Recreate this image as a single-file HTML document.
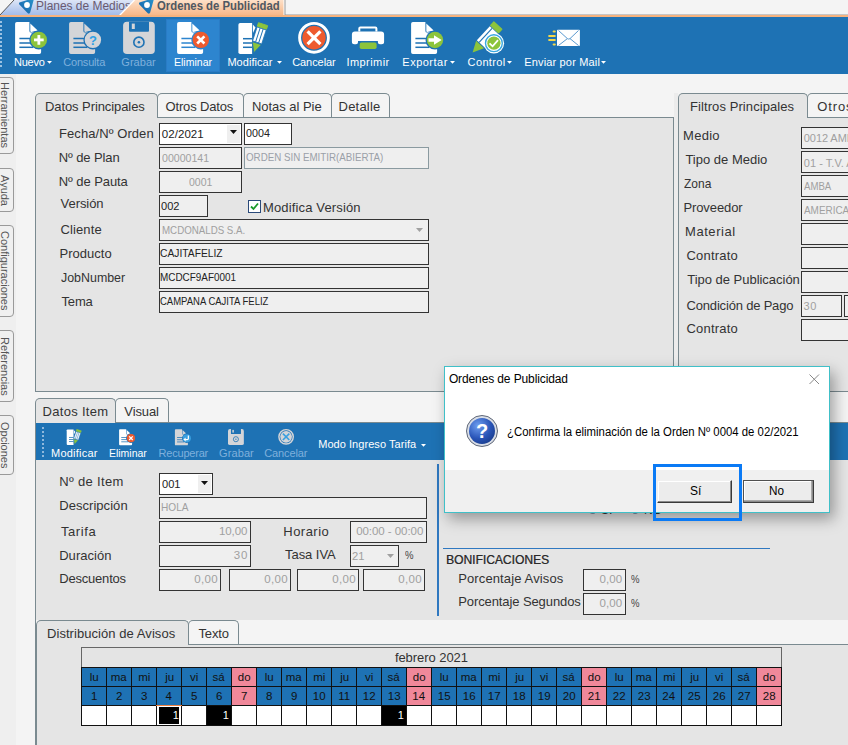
<!DOCTYPE html><html><head><meta charset="utf-8"><style>
html,body{margin:0;padding:0;width:848px;height:745px;overflow:hidden;background:#f4f4f4;position:relative;font-family:"Liberation Sans", sans-serif;}
.t{position:absolute;white-space:nowrap;}
.r{position:absolute;}
svg{position:absolute;overflow:visible;}
</style></head><body>
<div class="r" style="left:0px;top:0px;width:848px;height:16px;background:#f4f4f4;"></div>
<svg style="left:0;top:0" width="848" height="17"><defs><linearGradient id="gb" x1="0" y1="0" x2="0" y2="1"><stop offset="0" stop-color="#dde5f6"/><stop offset="1" stop-color="#a3bcea"/></linearGradient></defs><polygon points="0,15 14,0 140,0 125,15" fill="url(#gb)"/><line x1="0" y1="15" x2="14" y2="0" stroke="#555" stroke-width="1"/></svg>
<svg style="left:17.9px;top:-0.5999999999999996px" width="18" height="16" viewBox="0 0 18 16"><defs><linearGradient id="lg" x1="0" y1="1" x2="1" y2="0"><stop offset="0" stop-color="#155fa8"/><stop offset="1" stop-color="#2b95cc"/></linearGradient></defs><path d="M1.4 3.4 Q0.4 4.6 1.6 5.8 L9.8 14.2 Q11.4 15.4 12.2 13.6 L15.8 0.5 Q16.2 -1 14.6 -0.6 Z" fill="url(#lg)"/><circle cx="9" cy="6" r="2.9" fill="#fff"/></svg>
<div class="t" style="left:35.84px;top:-0.25px;font-size:12.5px;line-height:12.5px;color:#6a5a70;font-weight:normal;transform:scaleX(0.9560);transform-origin:0 0;">Planes de Medios</div>
<svg style="left:0;top:0" width="848" height="17"><defs><linearGradient id="go" x1="0" y1="0" x2="0" y2="1"><stop offset="0" stop-color="#fde0c8"/><stop offset="1" stop-color="#f7b585"/></linearGradient></defs><polygon points="119,16 134,0 284,0 284,16" fill="url(#go)"/><line x1="119.5" y1="15.5" x2="134.5" y2="0" stroke="#fff" stroke-width="1.2"/><line x1="284" y1="0" x2="284" y2="16" stroke="#fff" stroke-width="1"/><rect x="285" y="-1" width="570" height="16" fill="#f4f4f4" stroke="#999" stroke-width="1"/></svg>
<div class="r" style="left:0px;top:15px;width:848px;height:2px;background:#f5b27e;"></div>
<svg style="left:137.8px;top:-0.7000000000000002px" width="18" height="16" viewBox="0 0 18 16"><defs><linearGradient id="lg" x1="0" y1="1" x2="1" y2="0"><stop offset="0" stop-color="#155fa8"/><stop offset="1" stop-color="#2b95cc"/></linearGradient></defs><path d="M1.4 3.4 Q0.4 4.6 1.6 5.8 L9.8 14.2 Q11.4 15.4 12.2 13.6 L15.8 0.5 Q16.2 -1 14.6 -0.6 Z" fill="url(#lg)"/><circle cx="9" cy="6" r="2.9" fill="#fff"/></svg>
<div class="t" style="left:157.40px;top:-0.50px;font-size:12px;line-height:12px;color:#4f5862;font-weight:bold;transform:scaleX(0.9437);transform-origin:0 0;">Ordenes de Publicidad</div>
<div class="r" style="left:0px;top:17px;width:848px;height:57px;background:#1e72b4;"></div>
<div class="r" style="left:0px;top:21px;width:2px;height:47px;background:repeating-linear-gradient(#9cc2e2 0 2px, transparent 2px 4px);"></div>
<div class="r" style="left:166px;top:19px;width:54px;height:53px;background:#2d85cf;border:1px solid #2a7cc6;box-sizing:border-box;"></div>
<svg style="left:0;top:0" width="848" height="80"><path d="M16.9 22 L29.4 22 L29.4 31 Q29.4 32.6 31.1 32.6 L41.1 32.6 L41.1 52.2 Q41.1 54 39.3 54 L16.9 54 Q15.1 54 15.1 52.2 L15.1 23.8 Q15.1 22 16.9 22 Z" fill="#fff"/><path d="M30.299999999999997 23.6 L37.7 30.6 Q34.1 31.6 31.299999999999997 32 Q30.299999999999997 32 30.299999999999997 31 Z" fill="#fff"/><rect x="19.4" y="37.75" width="14" height="1.5" fill="#1e72b4"/><rect x="19.4" y="42.25" width="14" height="1.5" fill="#1e72b4"/><rect x="19.4" y="46.55" width="14" height="1.5" fill="#1e72b4"/><circle cx="38.8" cy="39.9" r="9.5" fill="#1e72b4"/><circle cx="38.8" cy="39.9" r="8.2" fill="#8cc43c"/><rect x="34" y="38.5" width="9.7" height="2.8" fill="#fff"/><rect x="37.45" y="35.05" width="2.8" height="9.7" fill="#fff"/><path d="M70.89999999999999 22 L83.39999999999999 22 L83.39999999999999 31 Q83.39999999999999 32.6 85.1 32.6 L95.1 32.6 L95.1 52.2 Q95.1 54 93.3 54 L70.89999999999999 54 Q69.1 54 69.1 52.2 L69.1 23.8 Q69.1 22 70.89999999999999 22 Z" fill="#d4d5d8"/><path d="M84.3 23.6 L91.69999999999999 30.6 Q88.1 31.6 85.3 32 Q84.3 32 84.3 31 Z" fill="#d4d5d8"/><rect x="73.39999999999999" y="37.75" width="14" height="1.5" fill="#1e72b4"/><rect x="73.39999999999999" y="42.25" width="14" height="1.5" fill="#1e72b4"/><rect x="73.39999999999999" y="46.55" width="14" height="1.5" fill="#1e72b4"/><circle cx="92.9" cy="39.9" r="9.5" fill="#1e72b4"/><circle cx="92.9" cy="39.9" r="8.2" fill="#d4d5d8"/><text x="93" y="44.6" font-size="13" font-weight="bold" text-anchor="middle" fill="#2fa0e4" font-family="Liberation Sans">?</text><path d="M127 21.8 L151 21.8 Q154.8 21.8 154.8 25.6 L154.8 50.2 Q154.8 54 151 54 L127 54 Q123.1 54 123.1 50.2 L123.1 25.6 Q123.1 21.8 127 21.8 Z" fill="#d4d5d8"/><path d="M129 21.8 L149 21.8 L149 30.8 Q149 31.8 148 31.8 L130 31.8 Q129 31.8 129 30.8 Z" fill="#1e72b4"/><rect x="131.8" y="23.6" width="3" height="5.4" fill="#d4d5d8"/><circle cx="138.9" cy="42.2" r="5.1" fill="none" stroke="#1e72b4" stroke-width="1.6"/><circle cx="138.9" cy="42.2" r="1.3" fill="#1e72b4"/><path d="M178.9 22 L191.4 22 L191.4 31 Q191.4 32.6 193.1 32.6 L203.1 32.6 L203.1 52.2 Q203.1 54 201.29999999999998 54 L178.9 54 Q177.1 54 177.1 52.2 L177.1 23.8 Q177.1 22 178.9 22 Z" fill="#fff"/><path d="M192.29999999999998 23.6 L199.7 30.6 Q196.1 31.6 193.29999999999998 32 Q192.29999999999998 32 192.29999999999998 31 Z" fill="#fff"/><rect x="181.4" y="37.75" width="14" height="1.5" fill="#2d85cf"/><rect x="181.4" y="42.25" width="14" height="1.5" fill="#2d85cf"/><rect x="181.4" y="46.55" width="14" height="1.5" fill="#2d85cf"/><circle cx="200.8" cy="39.9" r="9.5" fill="#2d85cf"/><circle cx="200.8" cy="39.9" r="8.2" fill="#ee5a2e"/><path d="M197.2 36.3 L204.4 43.5 M204.4 36.3 L197.2 43.5" stroke="#fff" stroke-width="2.6"/><path d="M240.2 22.9 L252.1 22.9 L252.1 54 L240.2 54 Q238.4 54 238.4 52.2 L238.4 24.7 Q238.4 22.9 240.2 22.9 Z" fill="#fff"/><path d="M252.8 24.5 L255.5 27.5 L253 33 Z" fill="#fff"/><rect x="243" y="37.95" width="9" height="1.5" fill="#1e72b4"/><rect x="243" y="42.25" width="9" height="1.5" fill="#1e72b4"/><rect x="243" y="46.55" width="9" height="1.5" fill="#1e72b4"/><polygon points="253.80,52.70 252.33,41.71 261.46,44.67" fill="#8cc43c" stroke="#1e72b4" stroke-width="0.8"/><polygon points="252.57,40.95 261.70,43.91 266.25,29.93 257.11,26.96" fill="#fff" stroke="#1e72b4" stroke-width="0.8"/><polyline points="255.62,41.93 260.16,27.95" stroke="#1e72b4" stroke-width="1"/><polyline points="258.66,42.92 263.20,28.94" stroke="#1e72b4" stroke-width="1"/><polygon points="257.36,26.20 266.49,29.17 267.64,25.65 258.51,22.69" fill="#8cc43c" stroke="#8cc43c" stroke-width="1" stroke-linejoin="round"/><circle cx="314" cy="37.8" r="14.4" fill="none" stroke="#fff" stroke-width="2.9"/><circle cx="314" cy="37.8" r="11.7" fill="#ee5a2e"/><path d="M307.6 31.4 L320.4 44.2 M320.4 31.4 L307.6 44.2" stroke="#fff" stroke-width="3.2"/><path d="M359.3 31.5 L359.3 28.6 Q359.3 27.6 360.3 27.6 L375.4 27.6 Q376.4 27.6 376.4 28.6 L376.4 31.5" fill="none" stroke="#fff" stroke-width="2"/><path d="M354.9 31.4 L381.1 31.4 Q384.1 31.4 384.1 34.4 L384.1 41.8 Q384.1 44.3 381.6 44.3 L379.9 44.3 Q377.9 44.3 377.9 42.3 L377.9 41 L358 41 L358 42.3 Q358 44.3 356 44.3 L354.4 44.3 Q351.9 44.3 351.9 41.8 L351.9 34.4 Q351.9 31.4 354.9 31.4 Z" fill="#fff"/><rect x="359.7" y="42.6" width="16.9" height="6.5" rx="1.8" fill="#8cc43c"/><path d="M412.90000000000003 22 L425.40000000000003 22 L425.40000000000003 31 Q425.40000000000003 32.6 427.1 32.6 L437.1 32.6 L437.1 52.2 Q437.1 54 435.3 54 L412.90000000000003 54 Q411.1 54 411.1 52.2 L411.1 23.8 Q411.1 22 412.90000000000003 22 Z" fill="#fff"/><path d="M426.3 23.6 L433.70000000000005 30.6 Q430.1 31.6 427.3 32 Q426.3 32 426.3 31 Z" fill="#fff"/><rect x="415.40000000000003" y="37.75" width="14" height="1.5" fill="#1e72b4"/><rect x="415.40000000000003" y="42.25" width="14" height="1.5" fill="#1e72b4"/><rect x="415.40000000000003" y="46.55" width="14" height="1.5" fill="#1e72b4"/><circle cx="435" cy="40" r="9.5" fill="#1e72b4"/><circle cx="435" cy="40" r="8.2" fill="#8cc43c"/><path d="M428.5 38.2 L434 38.2 L434 35.2 L441.7 40 L434 44.8 L434 41.8 L428.5 41.8 Z" fill="#fff"/><polygon points="472.60,52.60 476.15,40.87 484.05,48.24" fill="#8cc43c"/><polygon points="476.83,40.14 484.73,47.51 497.69,33.61 489.79,26.25" fill="#fff"/><polyline points="479.10,42.26 492.06,28.36" stroke="#1e72b4" stroke-width="1.1"/><polygon points="490.61,25.37 498.51,32.73 501.78,29.22 493.88,21.86" fill="#8cc43c" stroke="#8cc43c" stroke-width="1.2" stroke-linejoin="round"/><circle cx="493.9" cy="43.2" r="10.2" fill="#fff"/><circle cx="493.9" cy="43.2" r="8.4" fill="none" stroke="#3aa8e0" stroke-width="1.4"/><circle cx="493.9" cy="43.2" r="6.6" fill="#8cc43c"/><path d="M489.5 43.3 L492.6 46.3 L498 40.2" fill="none" stroke="#fff" stroke-width="1.8"/><rect x="557" y="29.8" width="22.9" height="16.3" rx="0.8" fill="#fff"/><path d="M558.5 30.5 L567.4 38.6 L558.5 45.5 M578.5 30.5 L570 38.6 L578.5 45.5 M567.4 38.6 Q568.7 39.6 570 38.6" fill="none" stroke="#5a9ad0" stroke-width="1"/><line x1="553.6" y1="31.5" x2="554.8" y2="31.5" stroke="#f5d84a" stroke-width="2" stroke-linecap="round"/><line x1="549.1" y1="35.9" x2="554.8" y2="35.9" stroke="#f5d84a" stroke-width="2" stroke-linecap="round"/><line x1="549.1" y1="40" x2="554.8" y2="40" stroke="#f5d84a" stroke-width="2" stroke-linecap="round"/><line x1="553.6" y1="44.6" x2="554.8" y2="44.6" stroke="#f5d84a" stroke-width="2" stroke-linecap="round"/></svg>
<div class="t" style="left:13.90px;top:57.00px;font-size:11px;line-height:11px;color:#fff;font-weight:normal;letter-spacing:-0.195px;">Nuevo</div>
<svg style="left:47.2px;top:61.2px" width="6" height="4"><path d="M0 0 L5 0 L2.5 2.8 Z" fill="#fff"/></svg>
<div class="t" style="left:63.20px;top:57.00px;font-size:11px;line-height:11px;color:#7fb0dc;font-weight:normal;letter-spacing:-0.185px;">Consulta</div>
<div class="t" style="left:121.30px;top:57.00px;font-size:11px;line-height:11px;color:#7fb0dc;font-weight:normal;letter-spacing:0.046px;">Grabar</div>
<div class="t" style="left:173.70px;top:57.00px;font-size:11px;line-height:11px;color:#fff;font-weight:normal;transform:scaleX(0.9559);transform-origin:0 0;">Eliminar</div>
<div class="t" style="left:227.40px;top:57.00px;font-size:11px;line-height:11px;color:#fff;font-weight:normal;letter-spacing:0.055px;">Modificar</div>
<svg style="left:277px;top:61.2px" width="6" height="4"><path d="M0 0 L5 0 L2.5 2.8 Z" fill="#fff"/></svg>
<div class="t" style="left:292.20px;top:57.00px;font-size:11px;line-height:11px;color:#fff;font-weight:normal;letter-spacing:-0.065px;">Cancelar</div>
<div class="t" style="left:346.40px;top:57.00px;font-size:11px;line-height:11px;color:#fff;font-weight:normal;letter-spacing:0.450px;">Imprimir</div>
<div class="t" style="left:402.30px;top:57.00px;font-size:11px;line-height:11px;color:#fff;font-weight:normal;letter-spacing:0.499px;">Exportar</div>
<svg style="left:450px;top:61.2px" width="6" height="4"><path d="M0 0 L5 0 L2.5 2.8 Z" fill="#fff"/></svg>
<div class="t" style="left:467.60px;top:57.00px;font-size:11px;line-height:11px;color:#fff;font-weight:normal;letter-spacing:0.364px;">Control</div>
<svg style="left:506.5px;top:61.2px" width="6" height="4"><path d="M0 0 L5 0 L2.5 2.8 Z" fill="#fff"/></svg>
<div class="t" style="left:524.20px;top:57.00px;font-size:11px;line-height:11px;color:#fff;font-weight:normal;letter-spacing:0.163px;">Enviar por Mail</div>
<svg style="left:600.8px;top:61.2px" width="6" height="4"><path d="M0 0 L5 0 L2.5 2.8 Z" fill="#fff"/></svg>
<div class="r" style="left:0px;top:74px;width:16px;height:671px;background:#efefef;"></div>
<div class="r" style="left:-6px;top:77px;width:20px;height:77px;border:1px solid #9a9a9a;border-radius:0 4px 4px 0;box-sizing:border-box;background:#f0f0f0;"></div>
<div class="t" style="left:-1px;top:77px;height:77px;width:12px;writing-mode:vertical-rl;font-size:11px;line-height:12px;color:#555;text-align:center;display:flex;align-items:center;justify-content:center;">Herramientas</div>
<div class="r" style="left:-6px;top:168px;width:20px;height:44px;border:1px solid #9a9a9a;border-radius:0 4px 4px 0;box-sizing:border-box;background:#f0f0f0;"></div>
<div class="t" style="left:-1px;top:168px;height:44px;width:12px;writing-mode:vertical-rl;font-size:11px;line-height:12px;color:#555;text-align:center;display:flex;align-items:center;justify-content:center;">Ayuda</div>
<div class="r" style="left:-6px;top:225px;width:20px;height:92px;border:1px solid #9a9a9a;border-radius:0 4px 4px 0;box-sizing:border-box;background:#f0f0f0;"></div>
<div class="t" style="left:-1px;top:225px;height:92px;width:12px;writing-mode:vertical-rl;font-size:11px;line-height:12px;color:#555;text-align:center;display:flex;align-items:center;justify-content:center;">Configuraciones</div>
<div class="r" style="left:-6px;top:330px;width:20px;height:72px;border:1px solid #9a9a9a;border-radius:0 4px 4px 0;box-sizing:border-box;background:#f0f0f0;"></div>
<div class="t" style="left:-1px;top:330px;height:72px;width:12px;writing-mode:vertical-rl;font-size:11px;line-height:12px;color:#555;text-align:center;display:flex;align-items:center;justify-content:center;">Referencias</div>
<div class="r" style="left:-6px;top:415px;width:20px;height:60px;border:1px solid #9a9a9a;border-radius:0 4px 4px 0;box-sizing:border-box;background:#f0f0f0;"></div>
<div class="t" style="left:-1px;top:415px;height:60px;width:12px;writing-mode:vertical-rl;font-size:11px;line-height:12px;color:#555;text-align:center;display:flex;align-items:center;justify-content:center;">Opciones</div>
<div class="r" style="left:35px;top:117px;width:639px;height:275px;background:#e5e5e5;border:1px solid #7a8a90;box-sizing:border-box;"></div>
<div class="r" style="left:35px;top:93px;width:123px;height:24px;background:#e5e5e5;border:1px solid #7a8a90;border-bottom:none;border-radius:5px 5px 0 0;box-sizing:border-box;"></div>
<div class="r" style="left:157px;top:93px;width:87px;height:24px;background:#f4f4f4;border:1px solid #7a8a90;border-bottom:none;border-radius:5px 5px 0 0;box-sizing:border-box;"></div>
<div class="r" style="left:243px;top:93px;width:89px;height:24px;background:#f4f4f4;border:1px solid #7a8a90;border-bottom:none;border-radius:5px 5px 0 0;box-sizing:border-box;"></div>
<div class="r" style="left:331px;top:93px;width:59px;height:24px;background:#f4f4f4;border:1px solid #7a8a90;border-bottom:none;border-radius:5px 5px 0 0;box-sizing:border-box;"></div>
<div class="r" style="left:36px;top:117px;width:121px;height:1px;background:#e5e5e5;"></div>
<div class="t" style="left:45.00px;top:99.80px;font-size:13px;line-height:13px;color:#333;font-weight:normal;letter-spacing:-0.085px;">Datos Principales</div>
<div class="t" style="left:165.50px;top:99.80px;font-size:13px;line-height:13px;color:#333;font-weight:normal;letter-spacing:-0.155px;">Otros Datos</div>
<div class="t" style="left:251.90px;top:99.80px;font-size:13px;line-height:13px;color:#333;font-weight:normal;letter-spacing:-0.024px;">Notas al Pie</div>
<div class="t" style="left:338.60px;top:99.80px;font-size:13px;line-height:13px;color:#333;font-weight:normal;letter-spacing:0.194px;">Detalle</div>
<div class="t" style="left:59.00px;top:126.80px;font-size:13px;line-height:13px;color:#333;font-weight:normal;letter-spacing:0.078px;">Fecha/Nº Orden</div>
<div class="t" style="left:58.80px;top:150.80px;font-size:13px;line-height:13px;color:#333;font-weight:normal;letter-spacing:-0.101px;">Nº de Plan</div>
<div class="t" style="left:58.80px;top:174.50px;font-size:13px;line-height:13px;color:#333;font-weight:normal;letter-spacing:-0.076px;">Nº de Pauta</div>
<div class="t" style="left:60.60px;top:196.90px;font-size:13px;line-height:13px;color:#333;font-weight:normal;letter-spacing:-0.072px;">Versión</div>
<div class="t" style="left:60.60px;top:222.60px;font-size:13px;line-height:13px;color:#333;font-weight:normal;letter-spacing:0.094px;">Cliente</div>
<div class="t" style="left:59.60px;top:246.50px;font-size:13px;line-height:13px;color:#333;font-weight:normal;letter-spacing:-0.000px;">Producto</div>
<div class="t" style="left:60.60px;top:270.60px;font-size:13px;line-height:13px;color:#333;font-weight:normal;transform:scaleX(0.9548);transform-origin:0 0;">JobNumber</div>
<div class="t" style="left:61.40px;top:294.80px;font-size:13px;line-height:13px;color:#333;font-weight:normal;letter-spacing:-0.120px;">Tema</div>
<div class="r" style="left:159px;top:123px;width:83px;height:22px;background:#fff;border:1px solid #333;box-sizing:border-box;"></div>
<div class="r" style="left:227px;top:125px;width:13px;height:18px;background:#efefef;"></div>
<svg style="left:230px;top:130px" width="8" height="5"><path d="M0 0 L7 0 L3.5 4 Z" fill="#111"/></svg>
<div class="t" style="left:161.80px;top:128.75px;font-size:11.5px;line-height:11.5px;color:#222;font-weight:normal;letter-spacing:0.054px;">02/2021</div>
<div class="r" style="left:244px;top:123px;width:48px;height:22px;background:#fff;border:1px solid #333;box-sizing:border-box;"></div>
<div class="t" style="left:246.00px;top:128.05px;font-size:11.5px;line-height:11.5px;color:#222;font-weight:normal;transform:scaleX(0.9318);transform-origin:0 0;">0004</div>
<div class="r" style="left:159px;top:147px;width:83px;height:22px;background:#efefef;border:1px solid #333;box-sizing:border-box;"></div>
<div class="t" style="left:161.50px;top:152.85px;font-size:11.5px;line-height:11.5px;color:#a0a0a0;font-weight:normal;transform:scaleX(0.9198);transform-origin:0 0;">00000141</div>
<div class="r" style="left:244px;top:147px;width:185px;height:22px;background:#efefef;border:1px solid #8a9aa0;box-sizing:border-box;"></div>
<div class="t" style="left:245.60px;top:152.30px;font-size:11px;line-height:11px;color:#9aa0a8;font-weight:normal;transform:scaleX(0.8867);transform-origin:0 0;">ORDEN SIN EMITIR(ABIERTA)</div>
<div class="r" style="left:159px;top:171px;width:83px;height:22px;background:#efefef;border:1px solid #333;box-sizing:border-box;"></div>
<div class="t" style="left:188.50px;top:176.55px;font-size:11.5px;line-height:11.5px;color:#a0a0a0;font-weight:normal;transform:scaleX(0.9132);transform-origin:0 0;">0001</div>
<div class="r" style="left:159px;top:195px;width:49px;height:22px;background:#efefef;border:1px solid #333;box-sizing:border-box;"></div>
<div class="t" style="left:160.50px;top:200.55px;font-size:11.5px;line-height:11.5px;color:#222;font-weight:normal;transform:scaleX(0.9632);transform-origin:0 0;">002</div>
<div class="r" style="left:248px;top:200px;width:13px;height:13px;background:#fff;border:1px solid #2a4a7a;box-sizing:border-box;"></div>
<svg style="left:249px;top:201px" width="11" height="11"><path d="M2 5.5 L4.5 8 L9 2.5" fill="none" stroke="#1a9a2a" stroke-width="1.8"/></svg>
<div class="t" style="left:263.00px;top:200.50px;font-size:13px;line-height:13px;color:#333;font-weight:normal;letter-spacing:0.143px;">Modifica Versión</div>
<div class="r" style="left:159px;top:219px;width:270px;height:22px;background:#efefef;border:1px solid #333;box-sizing:border-box;"></div>
<div class="t" style="left:162.40px;top:225.45px;font-size:10.5px;line-height:10.5px;color:#a0a0a0;font-weight:normal;transform:scaleX(0.9265);transform-origin:0 0;">MCDONALDS S.A.</div>
<svg style="left:416px;top:228px" width="8" height="5"><path d="M0 0 L7 0 L3.5 4 Z" fill="#a0a0a0"/></svg>
<div class="r" style="left:159px;top:243px;width:270px;height:22px;background:#efefef;border:1px solid #333;box-sizing:border-box;"></div>
<div class="t" style="left:160.40px;top:248.30px;font-size:11px;line-height:11px;color:#222;font-weight:normal;transform:scaleX(0.9345);transform-origin:0 0;">CAJITAFELIZ</div>
<div class="r" style="left:159px;top:267px;width:270px;height:22px;background:#efefef;border:1px solid #333;box-sizing:border-box;"></div>
<div class="t" style="left:160.40px;top:272.20px;font-size:11px;line-height:11px;color:#222;font-weight:normal;transform:scaleX(0.9010);transform-origin:0 0;">MCDCF9AF0001</div>
<div class="r" style="left:159px;top:291px;width:270px;height:22px;background:#efefef;border:1px solid #333;box-sizing:border-box;"></div>
<div class="t" style="left:160.40px;top:296.00px;font-size:11px;line-height:11px;color:#222;font-weight:normal;transform:scaleX(0.8638);transform-origin:0 0;">CAMPANA CAJITA FELIZ</div>
<div class="r" style="left:674px;top:93px;width:4px;height:299px;background:#ececec;"></div>
<div class="r" style="left:678px;top:117px;width:182px;height:275px;background:#e5e5e5;border:1px solid #7a8a90;box-sizing:border-box;"></div>
<div class="r" style="left:678px;top:93px;width:130px;height:24px;background:#e5e5e5;border:1px solid #7a8a90;border-bottom:none;border-radius:5px 5px 0 0;box-sizing:border-box;"></div>
<div class="r" style="left:807px;top:93px;width:64px;height:24px;background:#f4f4f4;border:1px solid #7a8a90;border-bottom:none;border-radius:5px 5px 0 0;box-sizing:border-box;"></div>
<div class="r" style="left:679px;top:117px;width:128px;height:1px;background:#e5e5e5;"></div>
<div class="t" style="left:690.00px;top:99.70px;font-size:13px;line-height:13px;color:#333;font-weight:normal;letter-spacing:0.084px;">Filtros Principales</div>
<div class="t" style="left:817.30px;top:99.70px;font-size:13px;line-height:13px;color:#333;font-weight:normal;letter-spacing:0.879px;">Otros</div>
<div class="t" style="left:683.10px;top:128.50px;font-size:13px;line-height:13px;color:#333;font-weight:normal;letter-spacing:0.256px;">Medio</div>
<div class="t" style="left:685.40px;top:152.50px;font-size:13px;line-height:13px;color:#333;font-weight:normal;letter-spacing:0.003px;">Tipo de Medio</div>
<div class="t" style="left:684.40px;top:176.50px;font-size:13px;line-height:13px;color:#333;font-weight:normal;transform:scaleX(0.9210);transform-origin:0 0;">Zona</div>
<div class="t" style="left:683.40px;top:200.50px;font-size:13px;line-height:13px;color:#333;font-weight:normal;letter-spacing:-0.094px;">Proveedor</div>
<div class="t" style="left:685.00px;top:225.00px;font-size:13px;line-height:13px;color:#333;font-weight:normal;letter-spacing:0.565px;">Material</div>
<div class="t" style="left:686.50px;top:248.70px;font-size:13px;line-height:13px;color:#333;font-weight:normal;letter-spacing:0.210px;">Contrato</div>
<div class="t" style="left:687.30px;top:273.00px;font-size:13px;line-height:13px;color:#333;font-weight:normal;letter-spacing:-0.025px;">Tipo de Publicación</div>
<div class="t" style="left:686.60px;top:298.50px;font-size:13px;line-height:13px;color:#333;font-weight:normal;letter-spacing:-0.189px;">Condición de Pago</div>
<div class="t" style="left:686.50px;top:322.00px;font-size:13px;line-height:13px;color:#333;font-weight:normal;letter-spacing:0.210px;">Contrato</div>
<div class="r" style="left:801px;top:127px;width:69px;height:22px;background:#efefef;border:1px solid #333;box-sizing:border-box;"></div>
<div class="t" style="left:803.80px;top:133.40px;font-size:11px;line-height:11px;color:#a0a0a0;font-weight:normal;letter-spacing:-0.070px;">0012 AMBA</div>
<div class="r" style="left:801px;top:151px;width:69px;height:22px;background:#efefef;border:1px solid #333;box-sizing:border-box;"></div>
<div class="t" style="left:803.80px;top:157.50px;font-size:11px;line-height:11px;color:#a0a0a0;font-weight:normal;letter-spacing:0.035px;">01 - T.V. AIRE</div>
<div class="r" style="left:801px;top:175px;width:69px;height:22px;background:#efefef;border:1px solid #333;box-sizing:border-box;"></div>
<div class="t" style="left:803.80px;top:181.00px;font-size:11px;line-height:11px;color:#a0a0a0;font-weight:normal;transform:scaleX(0.8732);transform-origin:0 0;">AMBA</div>
<div class="r" style="left:801px;top:199px;width:69px;height:22px;background:#efefef;border:1px solid #333;box-sizing:border-box;"></div>
<div class="t" style="left:803.80px;top:205.00px;font-size:11px;line-height:11px;color:#a0a0a0;font-weight:normal;transform:scaleX(0.9019);transform-origin:0 0;">AMERICA</div>
<div class="r" style="left:801px;top:223px;width:69px;height:22px;background:#efefef;border:1px solid #333;box-sizing:border-box;"></div>
<div class="r" style="left:801px;top:247px;width:69px;height:22px;background:#efefef;border:1px solid #333;box-sizing:border-box;"></div>
<div class="r" style="left:801px;top:271px;width:69px;height:22px;background:#efefef;border:1px solid #333;box-sizing:border-box;"></div>
<div class="r" style="left:801px;top:295px;width:41px;height:22px;background:#efefef;border:1px solid #333;box-sizing:border-box;"></div>
<div class="t" style="left:803.50px;top:301.00px;font-size:11px;line-height:11px;color:#a0a0a0;font-weight:normal;letter-spacing:0.682px;">30</div>
<div class="r" style="left:844px;top:295px;width:26px;height:22px;background:#efefef;border:1px solid #333;box-sizing:border-box;"></div>
<div class="r" style="left:801px;top:319px;width:69px;height:22px;background:#efefef;border:1px solid #333;box-sizing:border-box;"></div>
<div class="r" style="left:35px;top:422px;width:825px;height:338px;background:#e5e5e5;border:1px solid #7a8a90;box-sizing:border-box;"></div>
<div class="r" style="left:35px;top:398px;width:81px;height:24px;background:#e5e5e5;border:1px solid #7a8a90;border-bottom:none;border-radius:5px 5px 0 0;box-sizing:border-box;"></div>
<div class="r" style="left:115px;top:398px;width:54px;height:24px;background:#f4f4f4;border:1px solid #7a8a90;border-bottom:none;border-radius:5px 5px 0 0;box-sizing:border-box;"></div>
<div class="r" style="left:36px;top:422px;width:79px;height:1px;background:#e5e5e5;"></div>
<div class="t" style="left:42.60px;top:404.70px;font-size:13px;line-height:13px;color:#333;font-weight:normal;letter-spacing:0.286px;">Datos Item</div>
<div class="t" style="left:124.30px;top:404.70px;font-size:13px;line-height:13px;color:#333;font-weight:normal;letter-spacing:-0.097px;">Visual</div>
<div class="r" style="left:36px;top:423px;width:824px;height:37px;background:#1e72b4;"></div>
<div class="r" style="left:42px;top:427px;width:2px;height:30px;background:repeating-linear-gradient(#8fb8dc 0 2px, transparent 2px 4px);"></div>
<div class="t" style="left:51.00px;top:448.20px;font-size:11px;line-height:11px;color:#fff;font-weight:normal;letter-spacing:0.230px;">Modificar</div>
<div class="t" style="left:108.70px;top:448.20px;font-size:11px;line-height:11px;color:#fff;font-weight:normal;transform:scaleX(0.9509);transform-origin:0 0;">Eliminar</div>
<div class="t" style="left:158.50px;top:448.20px;font-size:11px;line-height:11px;color:#7fb0dc;font-weight:normal;letter-spacing:-0.199px;">Recuperar</div>
<div class="t" style="left:219.00px;top:448.20px;font-size:11px;line-height:11px;color:#7fb0dc;font-weight:normal;letter-spacing:0.106px;">Grabar</div>
<div class="t" style="left:264.30px;top:448.20px;font-size:11px;line-height:11px;color:#7fb0dc;font-weight:normal;letter-spacing:-0.137px;">Cancelar</div>
<div class="t" style="left:318.20px;top:438.50px;font-size:11px;line-height:11px;color:#fff;font-weight:normal;letter-spacing:0.050px;">Modo Ingreso Tarifa</div>
<svg style="left:421px;top:444px" width="6" height="4"><path d="M0 0 L5 0 L2.5 2.8 Z" fill="#fff"/></svg>
<svg style="left:0;top:0" width="848" height="745"><g transform="translate(-52.50,418.00) scale(0.5)"><path d="M240.2 22.9 L252.1 22.9 L252.1 54 L240.2 54 Q238.4 54 238.4 52.2 L238.4 24.7 Q238.4 22.9 240.2 22.9 Z" fill="#fff"/><path d="M252.8 24.5 L255.5 27.5 L253 33 Z" fill="#fff"/><rect x="243" y="37.95" width="9" height="1.5" fill="#1e72b4"/><rect x="243" y="42.25" width="9" height="1.5" fill="#1e72b4"/><rect x="243" y="46.55" width="9" height="1.5" fill="#1e72b4"/><polygon points="253.80,52.70 252.33,41.71 261.46,44.67" fill="#8cc43c" stroke="#1e72b4" stroke-width="0.8"/><polygon points="252.57,40.95 261.70,43.91 266.25,29.93 257.11,26.96" fill="#fff" stroke="#1e72b4" stroke-width="0.8"/><polyline points="255.62,41.93 260.16,27.95" stroke="#1e72b4" stroke-width="1"/><polyline points="258.66,42.92 263.20,28.94" stroke="#1e72b4" stroke-width="1"/><polygon points="257.36,26.20 266.49,29.17 267.64,25.65 258.51,22.69" fill="#8cc43c" stroke="#8cc43c" stroke-width="1" stroke-linejoin="round"/></g><g transform="translate(30.55,418.20) scale(0.5)"><path d="M178.9 22 L191.4 22 L191.4 31 Q191.4 32.6 193.1 32.6 L203.1 32.6 L203.1 52.2 Q203.1 54 201.29999999999998 54 L178.9 54 Q177.1 54 177.1 52.2 L177.1 23.8 Q177.1 22 178.9 22 Z" fill="#fff"/><path d="M192.29999999999998 23.6 L199.7 30.6 Q196.1 31.6 193.29999999999998 32 Q192.29999999999998 32 192.29999999999998 31 Z" fill="#fff"/><rect x="181.4" y="37.75" width="14" height="1.5" fill="#1e72b4"/><rect x="181.4" y="42.25" width="14" height="1.5" fill="#1e72b4"/><rect x="181.4" y="46.55" width="14" height="1.5" fill="#1e72b4"/><circle cx="200.8" cy="39.9" r="9.5" fill="#1e72b4"/><circle cx="200.8" cy="39.9" r="8.2" fill="#ee5a2e"/><path d="M197.2 36.3 L204.4 43.5 M204.4 36.3 L197.2 43.5" stroke="#fff" stroke-width="2.6"/></g><g transform="translate(140.35,418.30) scale(0.5)"><path d="M70.89999999999999 22 L83.39999999999999 22 L83.39999999999999 31 Q83.39999999999999 32.6 85.1 32.6 L95.1 32.6 L95.1 52.2 Q95.1 54 93.3 54 L70.89999999999999 54 Q69.1 54 69.1 52.2 L69.1 23.8 Q69.1 22 70.89999999999999 22 Z" fill="#d4d5d8"/><path d="M84.3 23.6 L91.69999999999999 30.6 Q88.1 31.6 85.3 32 Q84.3 32 84.3 31 Z" fill="#d4d5d8"/><rect x="73.39999999999999" y="37.75" width="14" height="1.5" fill="#1e72b4"/><rect x="73.39999999999999" y="42.25" width="14" height="1.5" fill="#1e72b4"/><rect x="73.39999999999999" y="46.55" width="14" height="1.5" fill="#1e72b4"/><circle cx="92.9" cy="39.9" r="9.5" fill="#1e72b4"/><circle cx="92.9" cy="39.9" r="8.2" fill="#3aa0e0"/><path d="M96 34.5 L96 40.5 Q96 42.5 94 42.5 L89.5 42.5" fill="none" stroke="#fff" stroke-width="2.4"/><path d="M90.5 38.5 L86 42.5 L90.5 46.5 Z" fill="#fff"/></g><g transform="translate(166.45,418.10) scale(0.5)"><path d="M127 21.8 L151 21.8 Q154.8 21.8 154.8 25.6 L154.8 50.2 Q154.8 54 151 54 L127 54 Q123.1 54 123.1 50.2 L123.1 25.6 Q123.1 21.8 127 21.8 Z" fill="#d4d5d8"/><path d="M129 21.8 L149 21.8 L149 30.8 Q149 31.8 148 31.8 L130 31.8 Q129 31.8 129 30.8 Z" fill="#1e72b4"/><rect x="131.8" y="23.6" width="3" height="5.4" fill="#d4d5d8"/><circle cx="138.9" cy="42.2" r="5.1" fill="none" stroke="#1e72b4" stroke-width="1.6"/><circle cx="138.9" cy="42.2" r="1.3" fill="#1e72b4"/></g><g transform="translate(129.10,417.90) scale(0.5)"><circle cx="314" cy="37.8" r="14.4" fill="none" stroke="#d4d5d8" stroke-width="2.9"/><circle cx="314" cy="37.8" r="11.7" fill="#d4d5d8"/><path d="M307.6 31.4 L320.4 44.2 M320.4 31.4 L307.6 44.2" stroke="#3aa0e0" stroke-width="3.2"/></g></svg>
<div class="t" style="left:59.20px;top:475.00px;font-size:13px;line-height:13px;color:#333;font-weight:normal;letter-spacing:0.336px;">Nº de Item</div>
<div class="t" style="left:59.20px;top:499.00px;font-size:13px;line-height:13px;color:#333;font-weight:normal;letter-spacing:0.052px;">Descripción</div>
<div class="t" style="left:61.00px;top:525.00px;font-size:13px;line-height:13px;color:#333;font-weight:normal;letter-spacing:0.568px;">Tarifa</div>
<div class="t" style="left:59.20px;top:548.70px;font-size:13px;line-height:13px;color:#333;font-weight:normal;letter-spacing:0.044px;">Duración</div>
<div class="t" style="left:59.20px;top:571.50px;font-size:13px;line-height:13px;color:#333;font-weight:normal;letter-spacing:-0.194px;">Descuentos</div>
<div class="r" style="left:159px;top:473px;width:54px;height:22px;background:#fff;border:1px solid #333;box-sizing:border-box;"></div>
<div class="r" style="left:198px;top:475px;width:13px;height:18px;background:#efefef;"></div>
<svg style="left:201px;top:481px" width="8" height="5"><path d="M0 0 L7 0 L3.5 4 Z" fill="#111"/></svg>
<div class="t" style="left:161.70px;top:479.25px;font-size:11.5px;line-height:11.5px;color:#222;font-weight:normal;transform:scaleX(0.9632);transform-origin:0 0;">001</div>
<div class="r" style="left:159px;top:497px;width:268px;height:22px;background:#efefef;border:1px solid #333;box-sizing:border-box;"></div>
<div class="t" style="left:161.20px;top:502.20px;font-size:11px;line-height:11px;color:#a0a0a0;font-weight:normal;transform:scaleX(0.9178);transform-origin:0 0;">HOLA</div>
<div class="r" style="left:159px;top:521px;width:92px;height:22px;background:#efefef;border:1px solid #333;box-sizing:border-box;"></div>
<div class="t" style="left:218.90px;top:525.75px;font-size:11.5px;line-height:11.5px;color:#a0a0a0;font-weight:normal;letter-spacing:-0.071px;">10,00</div>
<div class="r" style="left:159px;top:545px;width:92px;height:22px;background:#efefef;border:1px solid #333;box-sizing:border-box;"></div>
<div class="t" style="left:233.80px;top:549.75px;font-size:11.5px;line-height:11.5px;color:#a0a0a0;font-weight:normal;letter-spacing:0.804px;">30</div>
<div class="r" style="left:159px;top:569px;width:62px;height:22px;background:#efefef;border:1px solid #333;box-sizing:border-box;"></div>
<div class="t" style="left:194.20px;top:573.75px;font-size:11.5px;line-height:11.5px;color:#a0a0a0;font-weight:normal;letter-spacing:0.338px;">0,00</div>
<div class="r" style="left:229px;top:569px;width:62px;height:22px;background:#efefef;border:1px solid #333;box-sizing:border-box;"></div>
<div class="t" style="left:264.20px;top:573.75px;font-size:11.5px;line-height:11.5px;color:#a0a0a0;font-weight:normal;letter-spacing:0.338px;">0,00</div>
<div class="r" style="left:297px;top:569px;width:62px;height:22px;background:#efefef;border:1px solid #333;box-sizing:border-box;"></div>
<div class="t" style="left:332.20px;top:573.75px;font-size:11.5px;line-height:11.5px;color:#a0a0a0;font-weight:normal;letter-spacing:0.338px;">0,00</div>
<div class="r" style="left:363px;top:569px;width:62px;height:22px;background:#efefef;border:1px solid #333;box-sizing:border-box;"></div>
<div class="t" style="left:398.20px;top:573.75px;font-size:11.5px;line-height:11.5px;color:#a0a0a0;font-weight:normal;letter-spacing:0.338px;">0,00</div>
<div class="t" style="left:283.30px;top:524.60px;font-size:13px;line-height:13px;color:#333;font-weight:normal;letter-spacing:0.468px;">Horario</div>
<div class="t" style="left:285.00px;top:548.20px;font-size:13px;line-height:13px;color:#333;font-weight:normal;letter-spacing:-0.041px;">Tasa IVA</div>
<div class="r" style="left:350px;top:521px;width:77px;height:22px;background:#efefef;border:1px solid #333;box-sizing:border-box;"></div>
<div class="t" style="left:356.20px;top:525.75px;font-size:11.5px;line-height:11.5px;color:#a0a0a0;font-weight:normal;letter-spacing:-0.057px;">00:00 - 00:00</div>
<div class="r" style="left:350px;top:545px;width:49px;height:22px;background:#efefef;border:1px solid #333;box-sizing:border-box;"></div>
<div class="t" style="left:352.40px;top:551.25px;font-size:11.5px;line-height:11.5px;color:#a0a0a0;font-weight:normal;transform:scaleX(0.9761);transform-origin:0 0;">21</div>
<svg style="left:386.5px;top:554px" width="8" height="5"><path d="M0 0 L7 0 L3.5 4 Z" fill="#a0a0a0"/></svg>
<div class="t" style="left:405.20px;top:550.00px;font-size:11px;line-height:11px;color:#444;font-weight:normal;transform:scaleX(0.8700);transform-origin:0 0;">%</div>
<div class="r" style="left:437px;top:464px;width:2px;height:152px;background:#2f78c0;"></div>
<div class="r" style="left:443px;top:548px;width:327px;height:1px;background:#2f78c0;"></div>
<div class="t" style="left:446.37px;top:553.00px;font-size:13px;line-height:13px;color:#2a2a2a;font-weight:normal;transform:scaleX(0.9261);transform-origin:0 0;text-shadow:0.5px 0 0 rgba(40,40,40,0.6);">BONIFICACIONES</div>
<div class="t" style="left:458.20px;top:571.50px;font-size:13px;line-height:13px;color:#333;font-weight:normal;letter-spacing:0.124px;">Porcentaje Avisos</div>
<div class="t" style="left:458.20px;top:594.50px;font-size:13px;line-height:13px;color:#333;font-weight:normal;letter-spacing:-0.095px;">Porcentaje Segundos</div>
<div class="r" style="left:583px;top:569px;width:43px;height:22px;background:#efefef;border:1px solid #333;box-sizing:border-box;"></div>
<div class="t" style="left:599.50px;top:573.75px;font-size:11.5px;line-height:11.5px;color:#a0a0a0;font-weight:normal;letter-spacing:0.104px;">0,00</div>
<div class="r" style="left:583px;top:593px;width:43px;height:22px;background:#efefef;border:1px solid #333;box-sizing:border-box;"></div>
<div class="t" style="left:599.50px;top:597.75px;font-size:11.5px;line-height:11.5px;color:#a0a0a0;font-weight:normal;letter-spacing:0.104px;">0,00</div>
<div class="t" style="left:630.50px;top:574.00px;font-size:11px;line-height:11px;color:#444;font-weight:normal;transform:scaleX(0.8700);transform-origin:0 0;">%</div>
<div class="t" style="left:630.50px;top:598.00px;font-size:11px;line-height:11px;color:#444;font-weight:normal;transform:scaleX(0.8700);transform-origin:0 0;">%</div>
<div class="r" style="left:36px;top:620px;width:824px;height:25px;background:#f4f4f4;"></div>
<div class="r" style="left:36px;top:644px;width:824px;height:116px;background:#e5e5e5;border:1px solid #7a8a90;box-sizing:border-box;"></div>
<div class="r" style="left:36px;top:620px;width:153px;height:24px;background:#e5e5e5;border:1px solid #7a8a90;border-bottom:none;border-radius:5px 5px 0 0;box-sizing:border-box;"></div>
<div class="r" style="left:188px;top:620px;width:51px;height:24px;background:#f4f4f4;border:1px solid #7a8a90;border-bottom:none;border-radius:5px 5px 0 0;box-sizing:border-box;"></div>
<div class="r" style="left:37px;top:644px;width:151px;height:1px;background:#e5e5e5;"></div>
<div class="t" style="left:47.00px;top:626.70px;font-size:13px;line-height:13px;color:#333;font-weight:normal;letter-spacing:0.059px;">Distribución de Avisos</div>
<div class="t" style="left:198.40px;top:626.70px;font-size:13px;line-height:13px;color:#333;font-weight:normal;letter-spacing:-0.110px;">Texto</div>
<div class="r" style="left:81px;top:647px;width:701px;height:79px;background:#e4e4e4;border:1px solid #666;box-sizing:border-box;"></div>
<div class="t" style="left:394.90px;top:651.00px;font-size:13px;line-height:13px;color:#333;font-weight:normal;letter-spacing:-0.054px;">febrero 2021</div>
<div class="r" style="left:81px;top:667px;width:26px;height:20px;background:#1e72b4;border:1px solid #111;box-sizing:border-box;"></div>
<div class="r" style="left:81px;top:686px;width:26px;height:20px;background:#1e72b4;border:1px solid #111;box-sizing:border-box;"></div>
<div class="r" style="left:81px;top:705px;width:26px;height:21px;background:#fff;border:1px solid #111;box-sizing:border-box;"></div>
<div class="t" style="left:89.72px;top:671.75px;font-size:11.5px;line-height:11.5px;color:#111;font-weight:normal;">lu</div>
<div class="t" style="left:91.00px;top:690.75px;font-size:11.5px;line-height:11.5px;color:#111;font-weight:normal;">1</div>
<div class="r" style="left:106px;top:667px;width:26px;height:20px;background:#1e72b4;border:1px solid #111;box-sizing:border-box;"></div>
<div class="r" style="left:106px;top:686px;width:26px;height:20px;background:#1e72b4;border:1px solid #111;box-sizing:border-box;"></div>
<div class="r" style="left:106px;top:705px;width:26px;height:21px;background:#fff;border:1px solid #111;box-sizing:border-box;"></div>
<div class="t" style="left:110.71px;top:671.75px;font-size:11.5px;line-height:11.5px;color:#111;font-weight:normal;">ma</div>
<div class="t" style="left:116.00px;top:690.75px;font-size:11.5px;line-height:11.5px;color:#111;font-weight:normal;">2</div>
<div class="r" style="left:131px;top:667px;width:26px;height:20px;background:#1e72b4;border:1px solid #111;box-sizing:border-box;"></div>
<div class="r" style="left:131px;top:686px;width:26px;height:20px;background:#1e72b4;border:1px solid #111;box-sizing:border-box;"></div>
<div class="r" style="left:131px;top:705px;width:26px;height:21px;background:#fff;border:1px solid #111;box-sizing:border-box;"></div>
<div class="t" style="left:138.21px;top:671.75px;font-size:11.5px;line-height:11.5px;color:#111;font-weight:normal;">mi</div>
<div class="t" style="left:141.00px;top:690.75px;font-size:11.5px;line-height:11.5px;color:#111;font-weight:normal;">3</div>
<div class="r" style="left:156px;top:667px;width:26px;height:20px;background:#1e72b4;border:1px solid #111;box-sizing:border-box;"></div>
<div class="r" style="left:156px;top:686px;width:26px;height:20px;background:#1e72b4;border:1px solid #111;box-sizing:border-box;"></div>
<div class="r" style="left:156px;top:705px;width:26px;height:21px;background:#fff;border:1px solid #111;box-sizing:border-box;"></div>
<div class="t" style="left:165.22px;top:671.75px;font-size:11.5px;line-height:11.5px;color:#111;font-weight:normal;">ju</div>
<div class="t" style="left:165.50px;top:690.75px;font-size:11.5px;line-height:11.5px;color:#111;font-weight:normal;">4</div>
<div class="r" style="left:181px;top:667px;width:26px;height:20px;background:#1e72b4;border:1px solid #111;box-sizing:border-box;"></div>
<div class="r" style="left:181px;top:686px;width:26px;height:20px;background:#1e72b4;border:1px solid #111;box-sizing:border-box;"></div>
<div class="r" style="left:181px;top:705px;width:26px;height:21px;background:#fff;border:1px solid #111;box-sizing:border-box;"></div>
<div class="t" style="left:190.12px;top:671.75px;font-size:11.5px;line-height:11.5px;color:#111;font-weight:normal;">vi</div>
<div class="t" style="left:191.00px;top:690.75px;font-size:11.5px;line-height:11.5px;color:#111;font-weight:normal;">5</div>
<div class="r" style="left:206px;top:667px;width:26px;height:20px;background:#1e72b4;border:1px solid #111;box-sizing:border-box;"></div>
<div class="r" style="left:206px;top:686px;width:26px;height:20px;background:#1e72b4;border:1px solid #111;box-sizing:border-box;"></div>
<div class="r" style="left:206px;top:705px;width:26px;height:21px;background:#fff;border:1px solid #111;box-sizing:border-box;"></div>
<div class="t" style="left:212.62px;top:671.75px;font-size:11.5px;line-height:11.5px;color:#111;font-weight:normal;">sá</div>
<div class="t" style="left:216.00px;top:690.75px;font-size:11.5px;line-height:11.5px;color:#111;font-weight:normal;">6</div>
<div class="r" style="left:231px;top:667px;width:26px;height:20px;background:#f0889a;border:1px solid #111;box-sizing:border-box;"></div>
<div class="r" style="left:231px;top:686px;width:26px;height:20px;background:#f0889a;border:1px solid #111;box-sizing:border-box;"></div>
<div class="r" style="left:231px;top:705px;width:26px;height:21px;background:#fff;border:1px solid #111;box-sizing:border-box;"></div>
<div class="t" style="left:237.80px;top:671.75px;font-size:11.5px;line-height:11.5px;color:#111;font-weight:normal;">do</div>
<div class="t" style="left:241.00px;top:690.75px;font-size:11.5px;line-height:11.5px;color:#111;font-weight:normal;">7</div>
<div class="r" style="left:256px;top:667px;width:26px;height:20px;background:#1e72b4;border:1px solid #111;box-sizing:border-box;"></div>
<div class="r" style="left:256px;top:686px;width:26px;height:20px;background:#1e72b4;border:1px solid #111;box-sizing:border-box;"></div>
<div class="r" style="left:256px;top:705px;width:26px;height:21px;background:#fff;border:1px solid #111;box-sizing:border-box;"></div>
<div class="t" style="left:264.72px;top:671.75px;font-size:11.5px;line-height:11.5px;color:#111;font-weight:normal;">lu</div>
<div class="t" style="left:266.00px;top:690.75px;font-size:11.5px;line-height:11.5px;color:#111;font-weight:normal;">8</div>
<div class="r" style="left:281px;top:667px;width:26px;height:20px;background:#1e72b4;border:1px solid #111;box-sizing:border-box;"></div>
<div class="r" style="left:281px;top:686px;width:26px;height:20px;background:#1e72b4;border:1px solid #111;box-sizing:border-box;"></div>
<div class="r" style="left:281px;top:705px;width:26px;height:21px;background:#fff;border:1px solid #111;box-sizing:border-box;"></div>
<div class="t" style="left:285.71px;top:671.75px;font-size:11.5px;line-height:11.5px;color:#111;font-weight:normal;">ma</div>
<div class="t" style="left:291.00px;top:690.75px;font-size:11.5px;line-height:11.5px;color:#111;font-weight:normal;">9</div>
<div class="r" style="left:306px;top:667px;width:26px;height:20px;background:#1e72b4;border:1px solid #111;box-sizing:border-box;"></div>
<div class="r" style="left:306px;top:686px;width:26px;height:20px;background:#1e72b4;border:1px solid #111;box-sizing:border-box;"></div>
<div class="r" style="left:306px;top:705px;width:26px;height:21px;background:#fff;border:1px solid #111;box-sizing:border-box;"></div>
<div class="t" style="left:313.21px;top:671.75px;font-size:11.5px;line-height:11.5px;color:#111;font-weight:normal;">mi</div>
<div class="t" style="left:312.80px;top:690.75px;font-size:11.5px;line-height:11.5px;color:#111;font-weight:normal;">10</div>
<div class="r" style="left:331px;top:667px;width:26px;height:20px;background:#1e72b4;border:1px solid #111;box-sizing:border-box;"></div>
<div class="r" style="left:331px;top:686px;width:26px;height:20px;background:#1e72b4;border:1px solid #111;box-sizing:border-box;"></div>
<div class="r" style="left:331px;top:705px;width:26px;height:21px;background:#fff;border:1px solid #111;box-sizing:border-box;"></div>
<div class="t" style="left:340.22px;top:671.75px;font-size:11.5px;line-height:11.5px;color:#111;font-weight:normal;">ju</div>
<div class="t" style="left:338.23px;top:690.75px;font-size:11.5px;line-height:11.5px;color:#111;font-weight:normal;">11</div>
<div class="r" style="left:356px;top:667px;width:26px;height:20px;background:#1e72b4;border:1px solid #111;box-sizing:border-box;"></div>
<div class="r" style="left:356px;top:686px;width:26px;height:20px;background:#1e72b4;border:1px solid #111;box-sizing:border-box;"></div>
<div class="r" style="left:356px;top:705px;width:26px;height:21px;background:#fff;border:1px solid #111;box-sizing:border-box;"></div>
<div class="t" style="left:365.12px;top:671.75px;font-size:11.5px;line-height:11.5px;color:#111;font-weight:normal;">vi</div>
<div class="t" style="left:362.80px;top:690.75px;font-size:11.5px;line-height:11.5px;color:#111;font-weight:normal;">12</div>
<div class="r" style="left:381px;top:667px;width:26px;height:20px;background:#1e72b4;border:1px solid #111;box-sizing:border-box;"></div>
<div class="r" style="left:381px;top:686px;width:26px;height:20px;background:#1e72b4;border:1px solid #111;box-sizing:border-box;"></div>
<div class="r" style="left:381px;top:705px;width:26px;height:21px;background:#fff;border:1px solid #111;box-sizing:border-box;"></div>
<div class="t" style="left:387.62px;top:671.75px;font-size:11.5px;line-height:11.5px;color:#111;font-weight:normal;">sá</div>
<div class="t" style="left:387.80px;top:690.75px;font-size:11.5px;line-height:11.5px;color:#111;font-weight:normal;">13</div>
<div class="r" style="left:406px;top:667px;width:26px;height:20px;background:#f0889a;border:1px solid #111;box-sizing:border-box;"></div>
<div class="r" style="left:406px;top:686px;width:26px;height:20px;background:#f0889a;border:1px solid #111;box-sizing:border-box;"></div>
<div class="r" style="left:406px;top:705px;width:26px;height:21px;background:#fff;border:1px solid #111;box-sizing:border-box;"></div>
<div class="t" style="left:412.80px;top:671.75px;font-size:11.5px;line-height:11.5px;color:#111;font-weight:normal;">do</div>
<div class="t" style="left:412.30px;top:690.75px;font-size:11.5px;line-height:11.5px;color:#111;font-weight:normal;">14</div>
<div class="r" style="left:431px;top:667px;width:26px;height:20px;background:#1e72b4;border:1px solid #111;box-sizing:border-box;"></div>
<div class="r" style="left:431px;top:686px;width:26px;height:20px;background:#1e72b4;border:1px solid #111;box-sizing:border-box;"></div>
<div class="r" style="left:431px;top:705px;width:26px;height:21px;background:#fff;border:1px solid #111;box-sizing:border-box;"></div>
<div class="t" style="left:439.72px;top:671.75px;font-size:11.5px;line-height:11.5px;color:#111;font-weight:normal;">lu</div>
<div class="t" style="left:437.80px;top:690.75px;font-size:11.5px;line-height:11.5px;color:#111;font-weight:normal;">15</div>
<div class="r" style="left:456px;top:667px;width:26px;height:20px;background:#1e72b4;border:1px solid #111;box-sizing:border-box;"></div>
<div class="r" style="left:456px;top:686px;width:26px;height:20px;background:#1e72b4;border:1px solid #111;box-sizing:border-box;"></div>
<div class="r" style="left:456px;top:705px;width:26px;height:21px;background:#fff;border:1px solid #111;box-sizing:border-box;"></div>
<div class="t" style="left:460.71px;top:671.75px;font-size:11.5px;line-height:11.5px;color:#111;font-weight:normal;">ma</div>
<div class="t" style="left:462.80px;top:690.75px;font-size:11.5px;line-height:11.5px;color:#111;font-weight:normal;">16</div>
<div class="r" style="left:481px;top:667px;width:26px;height:20px;background:#1e72b4;border:1px solid #111;box-sizing:border-box;"></div>
<div class="r" style="left:481px;top:686px;width:26px;height:20px;background:#1e72b4;border:1px solid #111;box-sizing:border-box;"></div>
<div class="r" style="left:481px;top:705px;width:26px;height:21px;background:#fff;border:1px solid #111;box-sizing:border-box;"></div>
<div class="t" style="left:488.21px;top:671.75px;font-size:11.5px;line-height:11.5px;color:#111;font-weight:normal;">mi</div>
<div class="t" style="left:487.80px;top:690.75px;font-size:11.5px;line-height:11.5px;color:#111;font-weight:normal;">17</div>
<div class="r" style="left:506px;top:667px;width:26px;height:20px;background:#1e72b4;border:1px solid #111;box-sizing:border-box;"></div>
<div class="r" style="left:506px;top:686px;width:26px;height:20px;background:#1e72b4;border:1px solid #111;box-sizing:border-box;"></div>
<div class="r" style="left:506px;top:705px;width:26px;height:21px;background:#fff;border:1px solid #111;box-sizing:border-box;"></div>
<div class="t" style="left:515.22px;top:671.75px;font-size:11.5px;line-height:11.5px;color:#111;font-weight:normal;">ju</div>
<div class="t" style="left:512.80px;top:690.75px;font-size:11.5px;line-height:11.5px;color:#111;font-weight:normal;">18</div>
<div class="r" style="left:531px;top:667px;width:26px;height:20px;background:#1e72b4;border:1px solid #111;box-sizing:border-box;"></div>
<div class="r" style="left:531px;top:686px;width:26px;height:20px;background:#1e72b4;border:1px solid #111;box-sizing:border-box;"></div>
<div class="r" style="left:531px;top:705px;width:26px;height:21px;background:#fff;border:1px solid #111;box-sizing:border-box;"></div>
<div class="t" style="left:540.12px;top:671.75px;font-size:11.5px;line-height:11.5px;color:#111;font-weight:normal;">vi</div>
<div class="t" style="left:537.80px;top:690.75px;font-size:11.5px;line-height:11.5px;color:#111;font-weight:normal;">19</div>
<div class="r" style="left:556px;top:667px;width:26px;height:20px;background:#1e72b4;border:1px solid #111;box-sizing:border-box;"></div>
<div class="r" style="left:556px;top:686px;width:26px;height:20px;background:#1e72b4;border:1px solid #111;box-sizing:border-box;"></div>
<div class="r" style="left:556px;top:705px;width:26px;height:21px;background:#fff;border:1px solid #111;box-sizing:border-box;"></div>
<div class="t" style="left:562.62px;top:671.75px;font-size:11.5px;line-height:11.5px;color:#111;font-weight:normal;">sá</div>
<div class="t" style="left:562.80px;top:690.75px;font-size:11.5px;line-height:11.5px;color:#111;font-weight:normal;">20</div>
<div class="r" style="left:581px;top:667px;width:26px;height:20px;background:#f0889a;border:1px solid #111;box-sizing:border-box;"></div>
<div class="r" style="left:581px;top:686px;width:26px;height:20px;background:#f0889a;border:1px solid #111;box-sizing:border-box;"></div>
<div class="r" style="left:581px;top:705px;width:26px;height:21px;background:#fff;border:1px solid #111;box-sizing:border-box;"></div>
<div class="t" style="left:587.80px;top:671.75px;font-size:11.5px;line-height:11.5px;color:#111;font-weight:normal;">do</div>
<div class="t" style="left:587.80px;top:690.75px;font-size:11.5px;line-height:11.5px;color:#111;font-weight:normal;">21</div>
<div class="r" style="left:606px;top:667px;width:26px;height:20px;background:#1e72b4;border:1px solid #111;box-sizing:border-box;"></div>
<div class="r" style="left:606px;top:686px;width:26px;height:20px;background:#1e72b4;border:1px solid #111;box-sizing:border-box;"></div>
<div class="r" style="left:606px;top:705px;width:26px;height:21px;background:#fff;border:1px solid #111;box-sizing:border-box;"></div>
<div class="t" style="left:614.72px;top:671.75px;font-size:11.5px;line-height:11.5px;color:#111;font-weight:normal;">lu</div>
<div class="t" style="left:612.80px;top:690.75px;font-size:11.5px;line-height:11.5px;color:#111;font-weight:normal;">22</div>
<div class="r" style="left:631px;top:667px;width:26px;height:20px;background:#1e72b4;border:1px solid #111;box-sizing:border-box;"></div>
<div class="r" style="left:631px;top:686px;width:26px;height:20px;background:#1e72b4;border:1px solid #111;box-sizing:border-box;"></div>
<div class="r" style="left:631px;top:705px;width:26px;height:21px;background:#fff;border:1px solid #111;box-sizing:border-box;"></div>
<div class="t" style="left:635.71px;top:671.75px;font-size:11.5px;line-height:11.5px;color:#111;font-weight:normal;">ma</div>
<div class="t" style="left:637.80px;top:690.75px;font-size:11.5px;line-height:11.5px;color:#111;font-weight:normal;">23</div>
<div class="r" style="left:656px;top:667px;width:26px;height:20px;background:#1e72b4;border:1px solid #111;box-sizing:border-box;"></div>
<div class="r" style="left:656px;top:686px;width:26px;height:20px;background:#1e72b4;border:1px solid #111;box-sizing:border-box;"></div>
<div class="r" style="left:656px;top:705px;width:26px;height:21px;background:#fff;border:1px solid #111;box-sizing:border-box;"></div>
<div class="t" style="left:663.21px;top:671.75px;font-size:11.5px;line-height:11.5px;color:#111;font-weight:normal;">mi</div>
<div class="t" style="left:662.30px;top:690.75px;font-size:11.5px;line-height:11.5px;color:#111;font-weight:normal;">24</div>
<div class="r" style="left:681px;top:667px;width:26px;height:20px;background:#1e72b4;border:1px solid #111;box-sizing:border-box;"></div>
<div class="r" style="left:681px;top:686px;width:26px;height:20px;background:#1e72b4;border:1px solid #111;box-sizing:border-box;"></div>
<div class="r" style="left:681px;top:705px;width:26px;height:21px;background:#fff;border:1px solid #111;box-sizing:border-box;"></div>
<div class="t" style="left:690.22px;top:671.75px;font-size:11.5px;line-height:11.5px;color:#111;font-weight:normal;">ju</div>
<div class="t" style="left:687.80px;top:690.75px;font-size:11.5px;line-height:11.5px;color:#111;font-weight:normal;">25</div>
<div class="r" style="left:706px;top:667px;width:26px;height:20px;background:#1e72b4;border:1px solid #111;box-sizing:border-box;"></div>
<div class="r" style="left:706px;top:686px;width:26px;height:20px;background:#1e72b4;border:1px solid #111;box-sizing:border-box;"></div>
<div class="r" style="left:706px;top:705px;width:26px;height:21px;background:#fff;border:1px solid #111;box-sizing:border-box;"></div>
<div class="t" style="left:715.12px;top:671.75px;font-size:11.5px;line-height:11.5px;color:#111;font-weight:normal;">vi</div>
<div class="t" style="left:712.80px;top:690.75px;font-size:11.5px;line-height:11.5px;color:#111;font-weight:normal;">26</div>
<div class="r" style="left:731px;top:667px;width:26px;height:20px;background:#1e72b4;border:1px solid #111;box-sizing:border-box;"></div>
<div class="r" style="left:731px;top:686px;width:26px;height:20px;background:#1e72b4;border:1px solid #111;box-sizing:border-box;"></div>
<div class="r" style="left:731px;top:705px;width:26px;height:21px;background:#fff;border:1px solid #111;box-sizing:border-box;"></div>
<div class="t" style="left:737.62px;top:671.75px;font-size:11.5px;line-height:11.5px;color:#111;font-weight:normal;">sá</div>
<div class="t" style="left:737.80px;top:690.75px;font-size:11.5px;line-height:11.5px;color:#111;font-weight:normal;">27</div>
<div class="r" style="left:756px;top:667px;width:26px;height:20px;background:#f0889a;border:1px solid #111;box-sizing:border-box;"></div>
<div class="r" style="left:756px;top:686px;width:26px;height:20px;background:#f0889a;border:1px solid #111;box-sizing:border-box;"></div>
<div class="r" style="left:756px;top:705px;width:26px;height:21px;background:#fff;border:1px solid #111;box-sizing:border-box;"></div>
<div class="t" style="left:762.80px;top:671.75px;font-size:11.5px;line-height:11.5px;color:#111;font-weight:normal;">do</div>
<div class="t" style="left:762.80px;top:690.75px;font-size:11.5px;line-height:11.5px;color:#111;font-weight:normal;">28</div>
<div class="r" style="left:157px;top:706px;width:24px;height:19px;background:#fff;"></div>
<div class="r" style="left:159px;top:707px;width:20px;height:17px;background:#000;"></div>
<div class="r" style="left:156px;top:705px;width:26px;height:1px;background:#f08040;"></div>
<div class="t" style="left:172.80px;top:709.80px;font-size:11px;line-height:11px;color:#fff;font-weight:normal;">1</div>
<div class="r" style="left:207px;top:706px;width:24px;height:19px;background:#000;"></div>
<div class="t" style="left:222.80px;top:709.80px;font-size:11px;line-height:11px;color:#fff;font-weight:normal;">1</div>
<div class="r" style="left:382px;top:706px;width:24px;height:19px;background:#000;"></div>
<div class="t" style="left:397.80px;top:709.80px;font-size:11px;line-height:11px;color:#fff;font-weight:normal;">1</div>
<svg style="left:585px;top:500px" width="60" height="16"><circle cx="7.7" cy="8" r="5.2" fill="#fff" stroke="#3a5a80" stroke-width="1"/><circle cx="50.2" cy="8" r="5.2" fill="#fff" stroke="#3a5a80" stroke-width="1"/></svg>
<div class="t" style="left:601.00px;top:504.00px;font-size:12px;line-height:12px;color:#333;font-weight:normal;">SI</div>
<div class="t" style="left:644.00px;top:504.00px;font-size:12px;line-height:12px;color:#333;font-weight:normal;">NO</div>
<div class="r" style="left:444px;top:366px;width:386px;height:147px;box-shadow:4px 6px 14px rgba(0,0,0,0.35);"></div>
<div class="r" style="left:444px;top:366px;width:386px;height:147px;background:#fff;border:1px solid #40c0c8;box-sizing:border-box;"></div>
<div class="r" style="left:445px;top:470px;width:384px;height:42px;background:#f0f0f0;"></div>
<div class="t" style="left:448.90px;top:372.80px;font-size:12px;line-height:12px;color:#000;font-weight:normal;letter-spacing:-0.117px;">Ordenes de Publicidad</div>
<svg style="left:809px;top:374px" width="11" height="11"><path d="M0.5 0.5 L10 10 M10 0.5 L0.5 10" stroke="#888" stroke-width="1"/></svg>
<svg style="left:466px;top:415px" width="32" height="32" viewBox="0 0 32 32"><defs><radialGradient id="qg" cx="0.35" cy="0.3" r="0.8"><stop offset="0" stop-color="#6f9ff0"/><stop offset="0.6" stop-color="#2a55b8"/><stop offset="1" stop-color="#173a8a"/></radialGradient></defs><circle cx="16" cy="16" r="15.5" fill="#d8dde6" stroke="#606878" stroke-width="1"/><circle cx="16" cy="16" r="13" fill="url(#qg)"/><text x="16" y="23" font-size="20" font-weight="bold" text-anchor="middle" fill="#fff" font-family="Liberation Sans">?</text></svg>
<div class="t" style="left:506.60px;top:425.50px;font-size:12px;line-height:12px;color:#000;font-weight:normal;transform:scaleX(0.9474);transform-origin:0 0;">¿Confirma la eliminación de la Orden Nº 0004 de 02/2021</div>
<div class="r" style="left:657px;top:480px;width:75px;height:23px;background:#ececec;border:1px solid;box-sizing:border-box;border-color:#f0f0f0 #3a3a3a #3a3a3a #f0f0f0;box-shadow:inset -1px -1px 0 #8a8a8a, inset 1px 1px 0 #fff;"></div>
<div class="r" style="left:743px;top:480px;width:71px;height:23px;background:#ececec;border:1px solid;box-sizing:border-box;border-color:#505050 #3a3a3a #3a3a3a #505050;box-shadow:inset -1px -1px 0 #8a8a8a, inset -2px -2px 0 #a8a8a8, inset 1px 1px 0 #fff;"></div>
<div class="t" style="left:690.00px;top:485.00px;font-size:12px;line-height:12px;color:#000;font-weight:normal;">Sí</div>
<div class="t" style="left:769.00px;top:485.00px;font-size:12px;line-height:12px;color:#000;font-weight:normal;transform:scaleX(0.9766);transform-origin:0 0;">No</div>
<div class="r" style="left:653px;top:464px;width:89px;height:57px;border:3px solid #0a7af5;box-sizing:border-box;"></div>
</body></html>
